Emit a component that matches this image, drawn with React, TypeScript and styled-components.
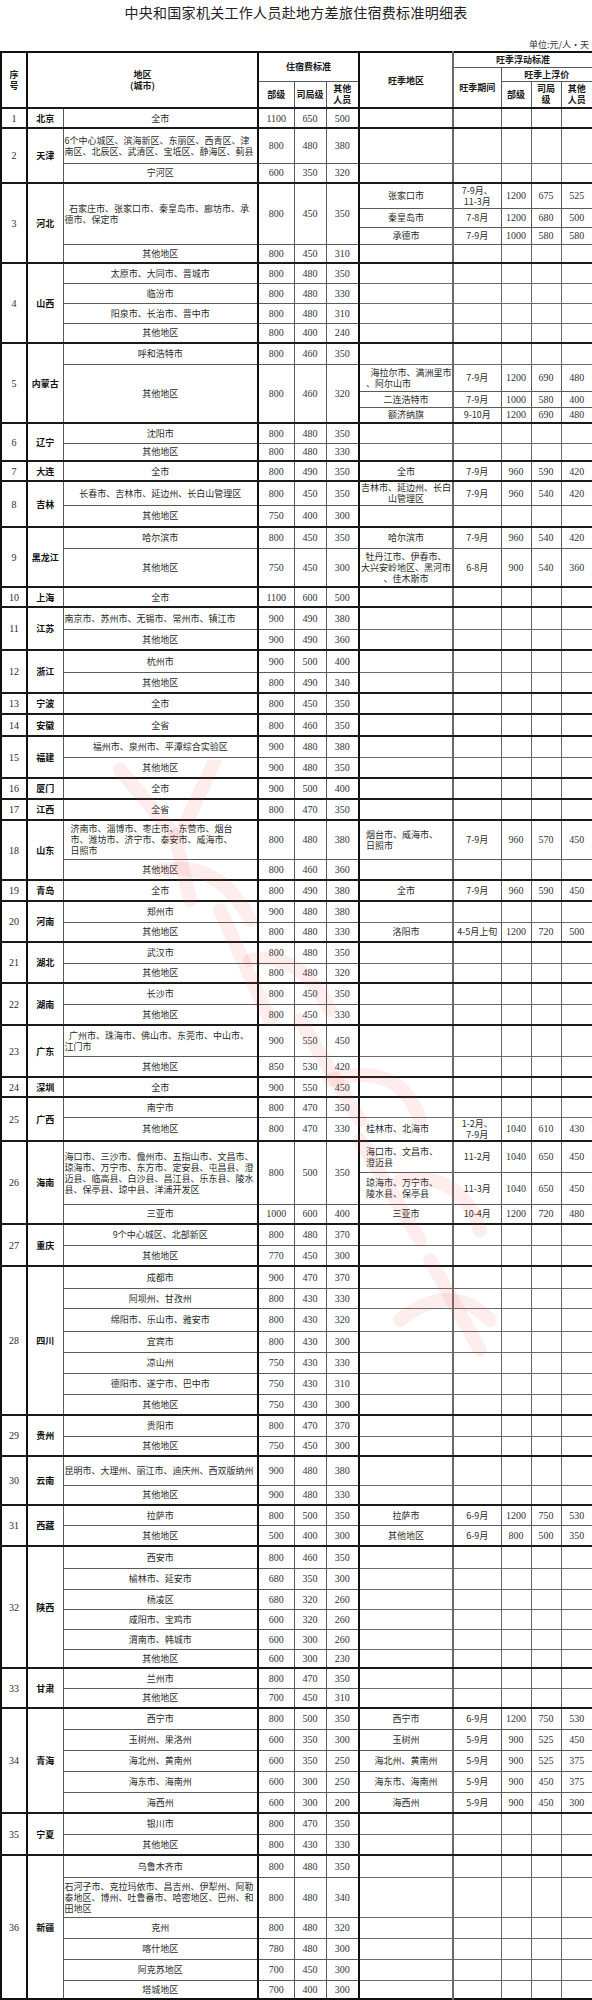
import React from 'react';
import styled, { createGlobalStyle, css } from 'styled-components';

const GlobalStyle = createGlobalStyle`
  html, body { margin: 0; padding: 0; background: #fff; }
  body { font-family: "Noto Sans CJK SC", sans-serif; color: #222; }
`;

type V = [number, number, number];
interface Peak { area: string; period: string; v: V; h: number; left?: boolean }
interface Sub { region: string; v: V; h?: number; left?: boolean; pl?: number; peaks?: Peak[] }
interface Group { no: number; name: string; subs: Sub[] }

const s = (region: string, v: V, h: number, extra: Partial<Sub> = {}): Sub => ({ region, v, h, ...extra });
const sp = (region: string, v: V, peaks: Peak[], extra: Partial<Sub> = {}): Sub => ({ region, v, peaks, ...extra });
const p = (area: string, period: string, v: V, h: number, left = false): Peak => ({ area, period, v, h, left });

const O = '其他地区';

const groups: Group[] = [
  { no: 1, name: '北京', subs: [s('全市', [1100, 650, 500], 20)] },
  { no: 2, name: '天津', subs: [
    s('6个中心城区、滨海新区、东丽区、西青区、津\n南区、北辰区、武清区、宝坻区、静海区、蓟县', [800, 480, 380], 35, { left: true }),
    s('宁河区', [600, 350, 320], 20),
  ] },
  { no: 3, name: '河北', subs: [
    sp('\u2002石家庄市、张家口市、秦皇岛市、廊坊市、承\n德市、保定市', [800, 450, 350], [
      p('张家口市', '7-9月、\n11-3月', [1200, 675, 525], 25),
      p('秦皇岛市', '7-8月', [1200, 680, 500], 19),
      p('承德市', '7-9月', [1000, 580, 580], 17),
    ], { left: true }),
    s(O, [800, 450, 310], 19),
  ] },
  { no: 4, name: '山西', subs: [
    s('太原市、大同市、晋城市', [800, 480, 350], 20),
    s('临汾市', [800, 480, 330], 20),
    s('阳泉市、长治市、晋中市', [800, 480, 310], 20),
    s(O, [800, 400, 240], 20),
  ] },
  { no: 5, name: '内蒙古', subs: [
    s('呼和浩特市', [800, 460, 350], 21),
    sp(O, [800, 460, 320], [
      p('\u2002海拉尔市、满洲里市\n、阿尔山市', '7-9月', [1200, 690, 480], 27, true),
      p('二连浩特市', '7-9月', [1000, 580, 400], 16),
      p('额济纳旗', '9-10月', [1200, 690, 480], 16),
    ]),
  ] },
  { no: 6, name: '辽宁', subs: [s('沈阳市', [800, 480, 350], 20), s(O, [800, 480, 330], 18)] },
  { no: 7, name: '大连', subs: [sp('全市', [800, 490, 350], [p('全市', '7-9月', [960, 590, 420], 20)])] },
  { no: 8, name: '吉林', subs: [
    sp('长春市、吉林市、延边州、长白山管理区', [800, 450, 350], [p('吉林市、延边州、长白\n山管理区', '7-9月', [960, 540, 420], 24)]),
    s(O, [750, 400, 300], 22),
  ] },
  { no: 9, name: '黑龙江', subs: [
    sp('哈尔滨市', [800, 450, 350], [p('哈尔滨市', '7-9月', [960, 540, 420], 21)]),
    sp(O, [750, 450, 300], [p('牡丹江市、伊春市、\n大兴安岭地区、黑河市\n、佳木斯市', '6-8月', [900, 540, 360], 39)]),
  ] },
  { no: 10, name: '上海', subs: [s('全市', [1100, 600, 500], 20)] },
  { no: 11, name: '江苏', subs: [
    s('南京市、苏州市、无锡市、常州市、镇江市', [900, 490, 380], 22, { left: true }),
    s(O, [900, 490, 360], 21),
  ] },
  { no: 12, name: '浙江', subs: [s('杭州市', [900, 500, 400], 22), s(O, [800, 490, 340], 21)] },
  { no: 13, name: '宁波', subs: [s('全市', [800, 450, 350], 21)] },
  { no: 14, name: '安徽', subs: [s('全省', [800, 460, 350], 22)] },
  { no: 15, name: '福建', subs: [s('福州市、泉州市、平潭综合实验区', [900, 480, 380], 21), s(O, [900, 480, 350], 21)] },
  { no: 16, name: '厦门', subs: [s('全市', [900, 500, 400], 21)] },
  { no: 17, name: '江西', subs: [s('全省', [800, 470, 350], 21)] },
  { no: 18, name: '山东', subs: [
    sp('济南市、淄博市、枣庄市、东营市、烟台\n市、潍坊市、济宁市、泰安市、威海市、\n日照市', [800, 480, 380], [
      p('烟台市、威海市、\n日照市', '7-9月', [960, 570, 450], 39, true),
    ], { left: true, pl: 7 }),
    s(O, [800, 460, 360], 21),
  ] },
  { no: 19, name: '青岛', subs: [sp('全市', [800, 490, 380], [p('全市', '7-9月', [960, 590, 450], 21)])] },
  { no: 20, name: '河南', subs: [
    s('郑州市', [900, 480, 380], 21),
    sp(O, [800, 480, 330], [p('洛阳市', '4-5月上旬', [1200, 720, 500], 20)]),
  ] },
  { no: 21, name: '湖北', subs: [s('武汉市', [800, 480, 350], 21), s(O, [800, 480, 320], 20)] },
  { no: 22, name: '湖南', subs: [s('长沙市', [800, 450, 350], 21), s(O, [800, 450, 330], 21)] },
  { no: 23, name: '广东', subs: [
    s('\u2002广州市、珠海市、佛山市、东莞市、中山市、\n江门市', [900, 550, 450], 31, { left: true }),
    s(O, [850, 530, 420], 21),
  ] },
  { no: 24, name: '深圳', subs: [s('全市', [900, 550, 450], 20)] },
  { no: 25, name: '广西', subs: [
    s('南宁市', [800, 470, 350], 20),
    sp(O, [800, 470, 330], [p('桂林市、北海市', '1-2月、\n7-9月', [1040, 610, 430], 24, true)]),
  ] },
  { no: 26, name: '海南', subs: [
    sp('海口市、三沙市、儋州市、五指山市、文昌市、\n琼海市、万宁市、东方市、定安县、屯昌县、澄\n迈县、临高县、白沙县、昌江县、乐东县、陵水\n县、保亭县、琼中县、洋浦开发区', [800, 500, 350], [
      p('海口市、文昌市、\n澄迈县', '11-2月', [1040, 650, 450], 31, true),
      p('琼海市、万宁市、\n陵水县、保亭县', '11-3月', [1040, 650, 450], 32, true),
    ], { left: true }),
    sp('三亚市', [1000, 600, 400], [p('三亚市', '10-4月', [1200, 720, 480], 20)]),
  ] },
  { no: 27, name: '重庆', subs: [s('9个中心城区、北部新区', [800, 480, 370], 21), s(O, [770, 450, 300], 21)] },
  { no: 28, name: '四川', subs: [
    s('成都市', [900, 470, 370], 22),
    s('阿坝州、甘孜州', [800, 430, 330], 20),
    s('绵阳市、乐山市、雅安市', [800, 430, 320], 23),
    s('宜宾市', [800, 430, 300], 21),
    s('凉山州', [750, 430, 330], 21),
    s('德阳市、遂宁市、巴中市', [750, 430, 310], 21),
    s(O, [750, 430, 300], 21),
  ] },
  { no: 29, name: '贵州', subs: [s('贵阳市', [800, 470, 370], 21), s(O, [750, 450, 300], 20)] },
  { no: 30, name: '云南', subs: [
    s('昆明市、大理州、丽江市、迪庆州、西双版纳州', [900, 480, 380], 29, { left: true }),
    s(O, [900, 480, 330], 20),
  ] },
  { no: 31, name: '西藏', subs: [
    sp('拉萨市', [800, 500, 350], [p('拉萨市', '6-9月', [1200, 750, 530], 20)]),
    sp(O, [500, 400, 300], [p(O, '6-9月', [800, 500, 350], 21)]),
  ] },
  { no: 32, name: '陕西', subs: [
    s('西安市', [800, 460, 350], 22),
    s('榆林市、延安市', [680, 350, 300], 21),
    s('杨凌区', [680, 320, 260], 20),
    s('咸阳市、宝鸡市', [600, 320, 260], 20),
    s('渭南市、韩城市', [600, 300, 260], 20),
    s(O, [600, 300, 230], 19),
  ] },
  { no: 33, name: '甘肃', subs: [s('兰州市', [800, 470, 350], 20), s(O, [700, 450, 310], 20)] },
  { no: 34, name: '青海', subs: [
    sp('西宁市', [800, 500, 350], [p('西宁市', '6-9月', [1200, 750, 530], 21)]),
    sp('玉树州、果洛州', [600, 350, 300], [p('玉树州', '5-9月', [900, 525, 450], 21)]),
    sp('海北州、黄南州', [600, 350, 250], [p('海北州、黄南州', '5-9月', [900, 525, 375], 21)]),
    sp('海东市、海南州', [600, 300, 250], [p('海东市、海南州', '5-9月', [900, 450, 375], 21)]),
    sp('海西州', [600, 300, 200], [p('海西州', '5-9月', [900, 450, 300], 21)]),
  ] },
  { no: 35, name: '宁夏', subs: [s('银川市', [800, 470, 350], 21), s(O, [800, 430, 330], 21)] },
  { no: 36, name: '新疆', subs: [
    s('乌鲁木齐市', [800, 480, 350], 22),
    s('石河子市、克拉玛依市、昌吉州、伊犁州、阿勒\n泰地区、博州、吐鲁番市、哈密地区、巴州、和\n田地区', [800, 480, 340], 40, { left: true }),
    s('克州', [800, 480, 320], 21),
    s('喀什地区', [780, 480, 300], 21),
    s('阿克苏地区', [700, 450, 300], 21),
    s('塔城地区', [700, 400, 300], 19),
  ] },
];

const Page = styled.div`
  position: relative;
  width: 592px;
  background: #fff;
`;

const Title = styled.h1`
  margin: 0;
  height: 24px;
  line-height: 24px;
  text-align: center;
  font-family: "Noto Sans CJK SC", sans-serif;
  font-size: 14px;
  font-weight: 400;
  letter-spacing: 0.3px;
  color: #222;
`;

const Unit = styled.div`
  height: 27px;
  display: flex;
  justify-content: flex-end;
  align-items: flex-end;
  padding-right: 3px;
  box-sizing: border-box;
  font-size: 9px;
  line-height: 12px;
  color: #333;
`;

const Table = styled.table`
  width: 592px;
  border-collapse: collapse;
  table-layout: fixed;
  border: 2px solid #111;
  background: #fff;
`;

const Col = styled.col<{ $w: number; $edge?: 'strong' | 'mid' }>`
  width: ${(pr) => pr.$w}px;
  ${(pr) => pr.$edge === 'strong' && css`border-right: 2px solid #111;`}
  ${(pr) => pr.$edge === 'mid' && css`border-right: 2px solid #6a6a6a;`}
`;

const Row = styled.tr<{ $h: number; $sep?: boolean }>`
  height: ${(pr) => pr.$h}px;
  ${(pr) => pr.$sep && css`border-top: 2px solid #1a1a1a;`}
`;

const BaseCell = styled.td`
  border: 1px solid #5a5a5a;
  padding: 0 1px;
  vertical-align: middle;
  text-align: center;
  font-family: "Noto Sans CJK SC", sans-serif;
  font-size: 9px;
  line-height: 11px;
  white-space: pre;
  overflow: hidden;
  color: #2a2a2a;
`;

const HeadCell = styled(BaseCell)`
  font-weight: 700;
  color: #1a1a1a;
  line-height: 11px;
`;

const NoCell = styled(BaseCell)`
  font-family: "Liberation Serif", "Noto Sans CJK SC", serif;
  font-size: 10px;
`;

const ProvCell = styled(BaseCell)`
  font-weight: 700;
  color: #111;
`;

const RegionCell = styled(BaseCell)<{ $left?: boolean; $pl?: number }>`
  text-align: ${(pr) => (pr.$left ? 'left' : 'center')};
  padding-left: ${(pr) => pr.$pl ?? 1}px;
`;

const NumCell = styled(BaseCell)`
  font-family: "Liberation Serif", "Noto Sans CJK SC", serif;
  font-size: 10px;
  color: #333;
`;

const AreaCell = styled(BaseCell)<{ $left?: boolean }>`
  text-align: ${(pr) => (pr.$left ? 'left' : 'center')};
  padding-left: ${(pr) => (pr.$left ? 6 : 1)}px;
  border-right-color: #6a6a6a;
`;

const PeriodCell = styled(BaseCell)`
  padding: 0;
`;

const EmptyCell = styled(BaseCell)`
  border-color: #6a6a6a;
`;

const Watermark = styled.svg`
  position: absolute;
  left: 100px;
  top: 760px;
  width: 420px;
  height: 640px;
  pointer-events: none;
`;

function GroupRows({ g }: { g: Group }) {
  const total = g.subs.reduce((n, sb) => n + (sb.peaks?.length ?? 1), 0);
  const rows: React.ReactNode[] = [];
  let first = true;
  g.subs.forEach((sub, si) => {
    const lines: (Peak | null)[] = sub.peaks ?? [null];
    lines.forEach((pk, pi) => {
      const h = pk ? pk.h : sub.h ?? 21;
      rows.push(
        <Row key={`${g.no}-${si}-${pi}`} $h={h} $sep={first}>
          {first && (
            <>
              <NoCell rowSpan={total}>{g.no}</NoCell>
              <ProvCell rowSpan={total}>{g.name}</ProvCell>
            </>
          )}
          {pi === 0 && (
            <>
              <RegionCell rowSpan={lines.length} $left={sub.left} $pl={sub.pl}>{sub.region}</RegionCell>
              {sub.v.map((x, k) => (
                <NumCell key={k} rowSpan={lines.length}>{x}</NumCell>
              ))}
            </>
          )}
          {pk ? (
            <>
              <AreaCell $left={pk.left}>{pk.area}</AreaCell>
              <PeriodCell>{pk.period}</PeriodCell>
              {pk.v.map((x, k) => (
                <NumCell key={k}>{x}</NumCell>
              ))}
            </>
          ) : (
            <>
              <EmptyCell />
              <EmptyCell />
              <EmptyCell />
              <EmptyCell />
              <EmptyCell />
            </>
          )}
        </Row>
      );
      first = false;
    });
  });
  return <>{rows}</>;
}

export default function App() {
  return (
    <Page>
      <GlobalStyle />
      <Title>中央和国家机关工作人员赴地方差旅住宿费标准明细表</Title>
      <Unit>单位:元/人·天</Unit>
      <Table>
        <colgroup>
          <Col $w={26} $edge="strong" />
          <Col $w={36} />
          <Col $w={195} $edge="strong" />
          <Col $w={36} />
          <Col $w={32} />
          <Col $w={33} $edge="strong" />
          <Col $w={94} $edge="mid" />
          <Col $w={48} />
          <Col $w={30} />
          <Col $w={30} />
          <Col $w={32} />
        </colgroup>
        <thead>
          <Row $h={15}>
            <HeadCell rowSpan={3}>{'序\n号'}</HeadCell>
            <HeadCell rowSpan={3} colSpan={2}>{'地区\n(城市)'}</HeadCell>
            <HeadCell rowSpan={2} colSpan={3}>住宿费标准</HeadCell>
            <HeadCell rowSpan={3}>旺季地区</HeadCell>
            <HeadCell colSpan={4}>旺季浮动标准</HeadCell>
          </Row>
          <Row $h={14}>
            <HeadCell rowSpan={2}>旺季期间</HeadCell>
            <HeadCell colSpan={3}>旺季上浮价</HeadCell>
          </Row>
          <Row $h={27}>
            <HeadCell>部级</HeadCell>
            <HeadCell>司局级</HeadCell>
            <HeadCell>{'其他\n人员'}</HeadCell>
            <HeadCell>部级</HeadCell>
            <HeadCell>{'司局\n级'}</HeadCell>
            <HeadCell>{'其他\n人员'}</HeadCell>
          </Row>
        </thead>
        <tbody>
          {groups.map((g) => (
            <GroupRows key={g.no} g={g} />
          ))}
        </tbody>
      </Table>
      <Watermark viewBox="0 0 420 640">
        <g fill="none" stroke="rgba(235,80,80,0.10)" strokeWidth="14" strokeLinecap="round" strokeLinejoin="round">
          <path d="M20 10 L75 75" />
          <path d="M115 0 L85 65" />
          <path d="M75 75 L90 140" />
          <path d="M60 110 Q120 100 150 160" />
          <path d="M120 150 L170 260" />
          <path d="M150 200 Q200 190 230 250" />
          <path d="M200 260 L260 360" />
          <path d="M230 320 Q300 300 320 360" />
          <path d="M260 380 L320 480" />
          <path d="M300 420 Q360 410 380 470" />
          <path d="M330 500 L380 590" />
          <path d="M300 560 Q350 520 390 560" />
        </g>
      </Watermark>
    </Page>
  );
}
